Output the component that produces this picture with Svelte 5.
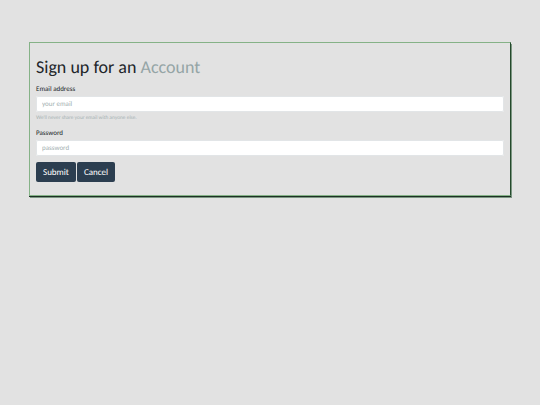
<script>
  let email = $state('');
  let password = $state('');

  function submit(event) {
    event.preventDefault();
  }

  function cancel() {
    email = '';
    password = '';
  }
</script>

<main>
  <form onsubmit={submit}>
    <h1>Sign up for an <small>Account</small></h1>
    <div class="group">
      <label for="email">Email address</label>
      <input id="email" type="email" placeholder="your email" aria-describedby="email-help" bind:value={email} />
      <p id="email-help">We'll never share your email with anyone else.</p>
    </div>
    <div class="group">
      <label for="password">Password</label>
      <input id="password" type="password" placeholder="password" bind:value={password} />
    </div>
    <div class="actions">
      <button type="submit">Submit</button>
      <button type="button" onclick={cancel}>Cancel</button>
    </div>
  </form>
</main>

<style>
  :global(body) {
    margin: 0;
    background: #e2e2e2;
  }

  main {
    padding: 42px 29px;
    font-family: Carlito, Lato, sans-serif;
    color: #212529;
    text-rendering: geometricPrecision;
  }

  form {
    padding: 13px 6px;
    border: 1px solid #85b287;
    border-right-color: #244a2c;
    box-shadow:
      0 1px 0 #1c3023,
      1px 2px 0 #7c9682;
  }

  h1 {
    margin: 0 0 6px;
    font-size: 18px;
    line-height: 22px;
    font-weight: 400;
  }

  small {
    font-size: inherit;
    color: #95a5a6;
  }

  .group {
    margin-bottom: 6px;
  }

  label {
    display: block;
    margin-bottom: 2px;
    font-size: 7px;
    line-height: 10px;
  }

  input {
    display: block;
    box-sizing: border-box;
    width: 100%;
    height: 16px;
    padding: 0 6px;
    border: 0;
    border-radius: 2px;
    background: #fff;
    box-shadow: inset 0 0 0 1px #e2e5e7;
    color: #495057;
    font: 7px/16px Carlito, Lato, sans-serif;
    text-rendering: inherit;
  }

  input::placeholder {
    color: #a3b0b1;
    opacity: 1;
  }

  p {
    margin: 2px 0 0;
    font-family: Lato, sans-serif;
    font-size: 5px;
    line-height: 8px;
    color: #a5b1b2;
  }

  .actions {
    display: flex;
    gap: 1px;
  }

  button {
    height: 20px;
    padding: 1px 7px 0;
    border: 0;
    border-radius: 2px;
    background: #2c3e50;
    color: #fff;
    font: 9px/19px Carlito, Lato, sans-serif;
    text-rendering: inherit;
  }
</style>
